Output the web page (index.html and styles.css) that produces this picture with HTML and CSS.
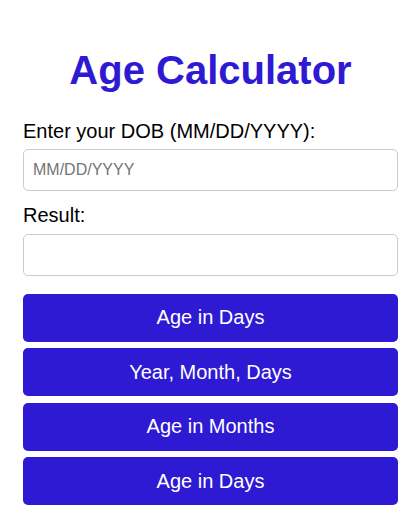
FILE: index.html
```html
<!DOCTYPE html>
<html lang="en">
<head>
<meta charset="utf-8">
<title>Age Calculator</title>
<link rel="stylesheet" href="styles.css">
</head>
<body>
<div class="container">
  <h1 class="title">Age Calculator</h1>
  <label class="label" for="dob">Enter your DOB (MM/DD/YYYY):</label>
  <input class="field field-dob" id="dob" type="text" placeholder="MM/DD/YYYY">
  <label class="label" for="result">Result:</label>
  <input class="field field-result" id="result" type="text" readonly>
  <div class="actions">
    <button class="btn" type="button">Age in Days</button>
    <button class="btn" type="button">Year, Month, Days</button>
    <button class="btn" type="button">Age in Months</button>
    <button class="btn" type="button">Age in Days</button>
  </div>
</div>
</body>
</html>
```
FILE: styles.css
```css
* {
  box-sizing: border-box;
}

html, body {
  margin: 0;
  padding: 0;
  background: #ffffff;
}

body {
  font-family: Arial, "Liberation Sans", sans-serif;
  color: #000000;
}

.container {
  display: flex;
  flex-direction: column;
  padding: 20px 20px 0 23px;
}

.title {
  margin: 26.8px 0;
  font-size: 40px;
  font-weight: bold;
  line-height: 46px;
  text-align: center;
  color: #2f1ad3;
}

.label {
  display: block;
  font-size: 20px;
  line-height: 23px;
  margin-bottom: 6.5px;
}

.field {
  display: block;
  width: 100%;
  height: 42px;
  padding: 0 9px;
  font-family: Arial, "Liberation Sans", sans-serif;
  font-size: 16px;
  border: 1px solid #cccccc;
  border-radius: 5px;
  background: #ffffff;
  color: #000000;
  outline: none;
}

.field::placeholder {
  color: #757575;
}

.field-dob {
  margin-bottom: 13px;
}

.actions {
  display: flex;
  flex-direction: column;
  gap: 6.6px;
  margin-top: 18px;
}

.btn {
  display: block;
  width: 100%;
  height: 48px;
  border: 0;
  border-radius: 5px;
  background: #2f1ad3;
  color: #ffffff;
  font-family: Arial, "Liberation Sans", sans-serif;
  font-size: 20px;
  padding: 0;
  cursor: pointer;
}
```
